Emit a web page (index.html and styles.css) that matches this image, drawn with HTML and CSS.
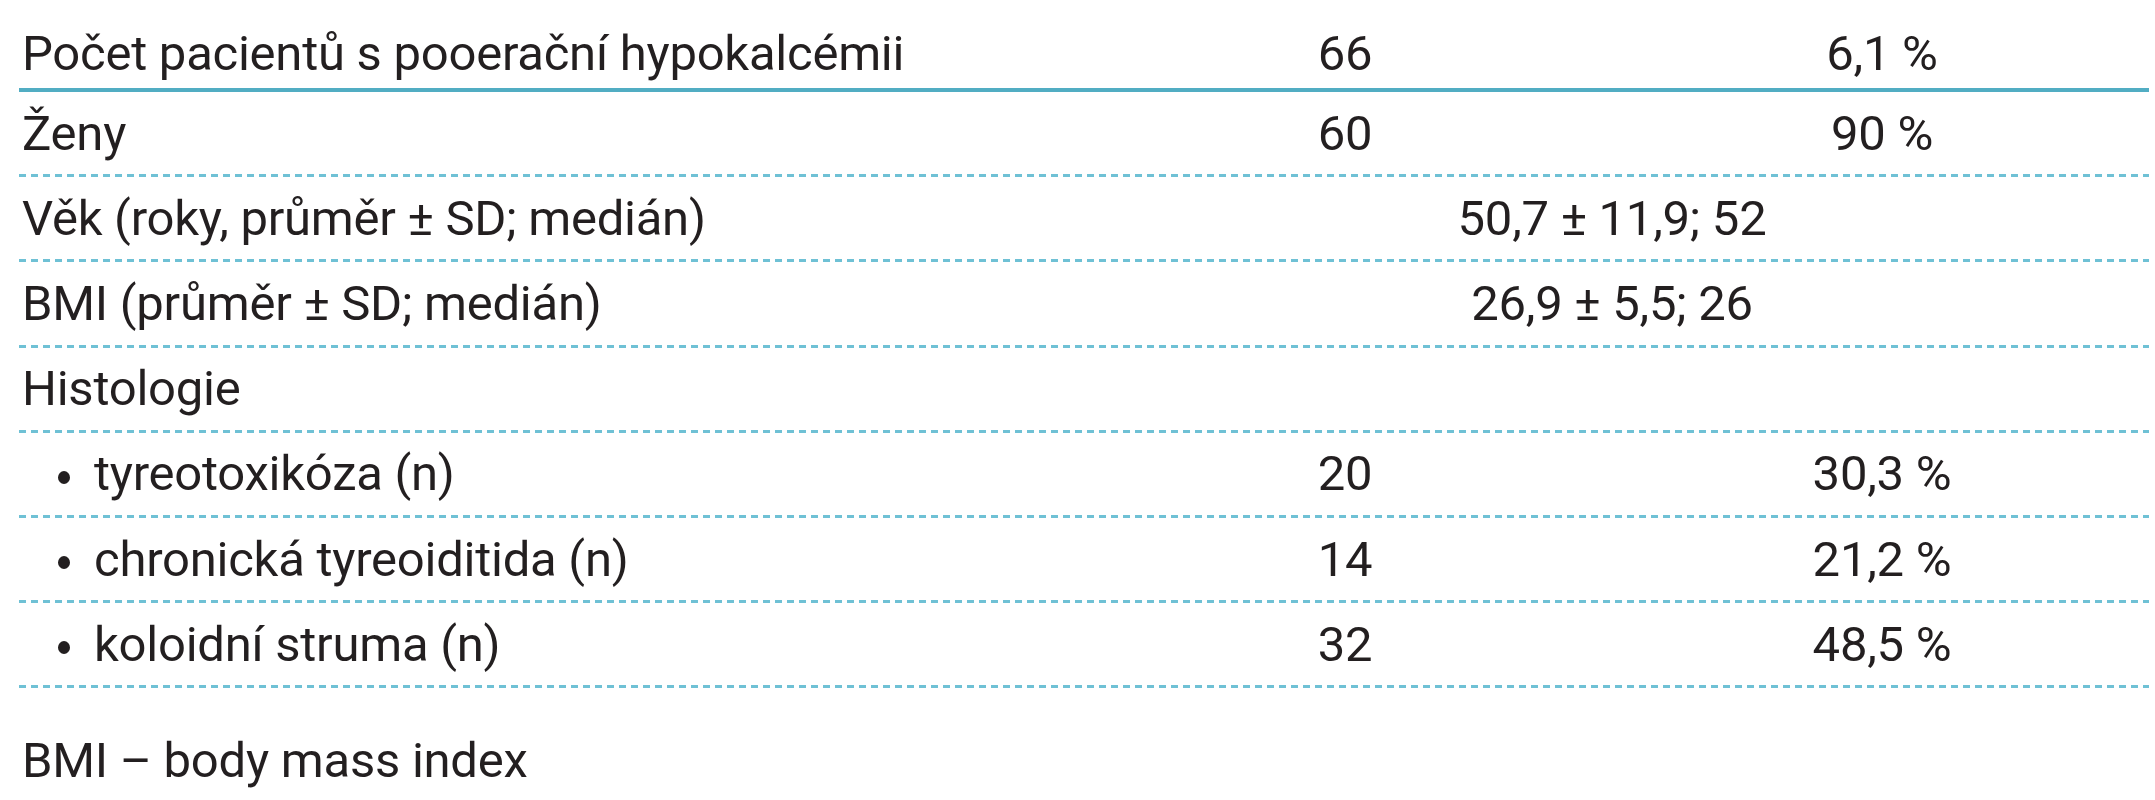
FILE: index.html
```html
<!DOCTYPE html>
<html lang="cs">
<head>
<meta charset="utf-8">
<title>Tabulka</title>
<link rel="stylesheet" href="styles.css">
</head>
<body>
<div class="table">
  <div class="row first">
    <div class="c1">Počet pacientů s pooerační hypokalcémii</div>
    <div class="c2">66</div>
    <div class="c3">6,1 %</div>
  </div>
  <div class="row">
    <div class="c1">Ženy</div>
    <div class="c2">60</div>
    <div class="c3">90 %</div>
  </div>
  <div class="row">
    <div class="c1">Věk (roky, průměr ± SD; medián)</div>
    <div class="c23">50,7 ± 11,9; 52</div>
  </div>
  <div class="row">
    <div class="c1">BMI (průměr ± SD; medián)</div>
    <div class="c23">26,9 ± 5,5; 26</div>
  </div>
  <div class="row">
    <div class="c1">Histologie</div>
  </div>
  <div class="row">
    <div class="c1 sub"><span class="bullet"></span>tyreotoxikóza (n)</div>
    <div class="c2">20</div>
    <div class="c3">30,3 %</div>
  </div>
  <div class="row">
    <div class="c1 sub"><span class="bullet"></span>chronická tyreoiditida (n)</div>
    <div class="c2">14</div>
    <div class="c3">21,2 %</div>
  </div>
  <div class="row">
    <div class="c1 sub"><span class="bullet"></span>koloidní struma (n)</div>
    <div class="c2">32</div>
    <div class="c3">48,5 %</div>
  </div>
</div>
<p class="note">BMI – body mass index</p>
</body>
</html>
```

FILE: styles.css
```css
html, body {
  margin: 0;
  padding: 0;
  background: #ffffff;
}
body {
  font-family: Roboto, "Liberation Sans", sans-serif;
  font-size: 49px;
  letter-spacing: -0.25px;
  color: #231f20;
  padding: 8px 6px 0 19px;
}
.table {
  display: flex;
  flex-direction: column;
}
.row {
  display: grid;
  grid-template-columns: 1056px 540px 1fr;
  align-items: center;
  height: 85.2px;
  box-sizing: border-box;
  padding-bottom: 3px;
  background-image: repeating-linear-gradient(to right, #6fc1d5 0 7px, transparent 7px 12px);
  background-size: 100% 3px;
  background-position: left bottom;
  background-repeat: no-repeat;
}
.row.first {
  height: 84px;
  padding-top: 10px;
  padding-bottom: 4px;
  background-image: linear-gradient(#51adc3, #51adc3);
  background-size: 100% 4px;
}
.c1 {
  padding-left: 3px;
  white-space: nowrap;
}
.c1.sub {
  padding-left: 39px;
}
.bullet {
  display: inline-block;
  width: 12px;
  height: 13px;
  border-radius: 50%;
  background: #231f20;
  vertical-align: middle;
  margin-right: 24px;
}
.c2, .c3 {
  text-align: center;
}
.c23 {
  grid-column: 2 / 4;
  text-align: center;
}
.note {
  margin: 44px 0 0 3px;
}
```
